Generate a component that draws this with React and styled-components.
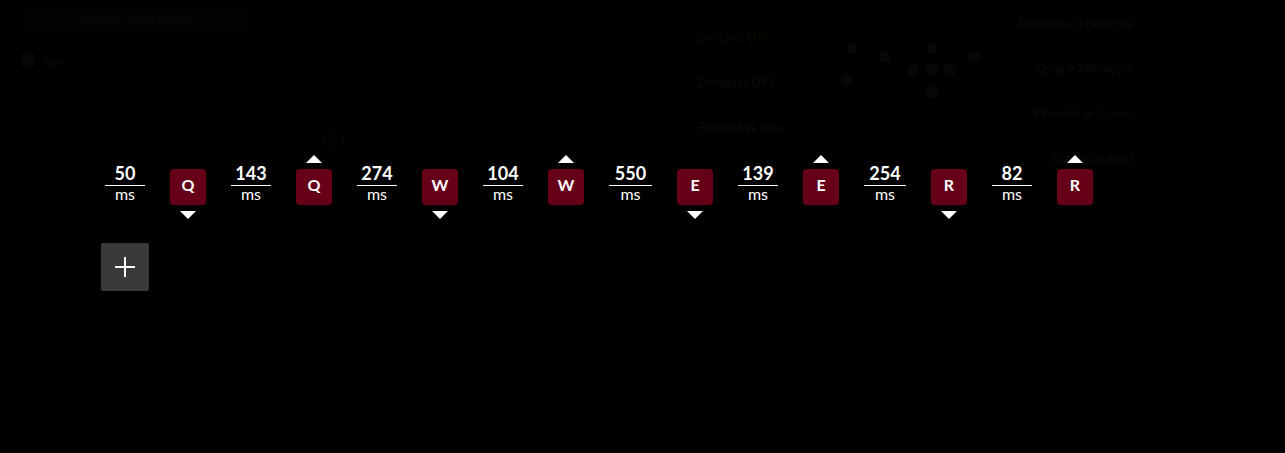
import React from "react";
import styled, { createGlobalStyle } from "styled-components";

const GlobalStyle = createGlobalStyle`
  * { box-sizing: border-box; }
  body {
    margin: 0;
    background: #000;
    color: #fff;
    font-family: Lato, "Open Sans", sans-serif;
  }
  button { font: inherit; color: inherit; border: 0; padding: 0; }
`;

const Screen = styled.div`
  position: relative;
  min-height: 100vh;
`;

const Underlay = styled.div`
  display: flex;
  justify-content: space-between;
  padding: 7px 152px 0 21px;
  color: #090909;
  font-size: 13px;
  line-height: 16px;
  font-weight: 700;
`;

const Sidebar = styled.div`
  display: flex;
  flex-direction: column;
  gap: 20px;
  width: 313px;
`;

const CreateButton = styled.button`
  width: 230px;
  height: 25px;
  background: #020202;
  font-size: 10px;
  text-align: center;
`;

const MacroRow = styled.div`
  display: flex;
  align-items: center;
  gap: 10px;
  height: 16px;
`;

const MacroIcon = styled.span`
  width: 14px;
  height: 14px;
  border-radius: 2px;
  background: #060606;
`;

const CollapseButton = styled.button`
  align-self: flex-end;
  width: 20px;
  height: 20px;
  margin: 42px -10px 0 0;
  border: 1px solid #090909;
  border-radius: 50%;
  background: none;
  line-height: 16px;
`;

const Assignments = styled.div`
  display: flex;
  gap: 24px;
`;

const Labels = styled.ul`
  display: flex;
  flex-direction: column;
  gap: 29px;
  width: 120px;
  margin: 0;
  padding: ${(p) => (p.$end ? "8px" : "22px")} 0 0;
  list-style: none;
  text-align: ${(p) => (p.$end ? "right" : "left")};
  white-space: nowrap;
`;

const Label = styled.li`
  color: ${(p) => (p.$accent ? "#090700" : "#090909")};
`;

const Mouse = styled.svg`
  width: 148px;
  height: 100px;
  fill: #070707;
`;

const Editor = styled.main`
  position: absolute;
  inset: 0;
  padding: 155px 101px 0;
`;

const Timeline = styled.ol`
  display: flex;
  flex-wrap: wrap;
  align-items: center;
  gap: 25px;
  margin: 0;
  padding: 0 4px;
  list-style: none;
`;

const Step = styled.li`
  display: flex;
  align-items: center;
  gap: 25px;
`;

const Delay = styled.div`
  width: ${(p) => p.$width}px;
  padding-bottom: 8px;
  text-align: center;
`;

const Amount = styled.div`
  height: 22px;
  border-bottom: 1px solid #fff;
  font-size: 18px;
  line-height: 18px;
  font-weight: 700;
`;

const Unit = styled.div`
  font-size: 16px;
  line-height: 16px;
`;

const KeyEvent = styled.div`
  display: flex;
  flex-direction: column;
  align-items: center;
  gap: 6px;
`;

const Arrow = styled.span`
  width: 16px;
  height: 8px;
  background: ${(p) => (p.$shown ? "#fff" : "none")};
  clip-path: ${(p) =>
    p.$up ? "polygon(50% 0, 100% 100%, 0 100%)" : "polygon(0 0, 100% 0, 50% 100%)"};
`;

const Key = styled.button`
  width: 36px;
  height: 36px;
  padding-bottom: 4px;
  border-radius: 4px;
  background: #660019;
  font-size: 16px;
  line-height: 32px;
  font-weight: 700;
  text-align: center;
`;

const AddButton = styled.button`
  display: grid;
  place-items: center;
  width: 48px;
  height: 48px;
  margin-top: 24px;
  border-radius: 2px;
  background: #3a3a3a;
`;

const steps = [
  { ms: 50, key: "Q", up: false },
  { ms: 143, key: "Q", up: true },
  { ms: 274, key: "W", up: false },
  { ms: 104, key: "W", up: true },
  { ms: 550, key: "E", up: false, width: 43 },
  { ms: 139, key: "E", up: true },
  { ms: 254, key: "R", up: false, width: 42 },
  { ms: 82, key: "R", up: true },
];

const dots = [
  [11, 41], [44, 50], [6, 73], [72, 63], [91, 41], [91, 63], [109, 63], [91, 85], [133, 50],
];

export default function App() {
  return (
    <Screen>
      <GlobalStyle />
      <Underlay>
        <Sidebar>
          <CreateButton>UTWÓRZ NOWE MAKRO</CreateButton>
          <MacroRow>
            <MacroIcon />
            qw
          </MacroRow>
          <CollapseButton aria-label="Zwiń">‹</CollapseButton>
        </Sidebar>
        <Assignments>
          <Labels>
            <Label $accent>Zwiększ DPI</Label>
            <Label>Zmniejsz DPI</Label>
            <Label>Przewiń w lewo</Label>
          </Labels>
          <Mouse viewBox="0 0 148 100" aria-hidden="true">
            {dots.map(([x, y]) => (
              <circle key={`${x}-${y}`} cx={x} cy={y} r="6" />
            ))}
          </Mouse>
          <Labels $end>
            <Label>Środkowe kliknięcie</Label>
            <Label>Drugie kliknięcie</Label>
            <Label>Przewiń w prawo</Label>
            <Label>Przejście dalej</Label>
          </Labels>
        </Assignments>
      </Underlay>
      <Editor>
        <Timeline>
          {steps.map((s, i) => (
            <Step key={i}>
              <Delay $width={s.width || 40}>
                <Amount>{s.ms}</Amount>
                <Unit>ms</Unit>
              </Delay>
              <KeyEvent>
                <Arrow $up $shown={s.up} />
                <Key>{s.key}</Key>
                <Arrow $shown={!s.up} />
              </KeyEvent>
            </Step>
          ))}
        </Timeline>
        <AddButton aria-label="Dodaj">
          <svg width="20" height="20" viewBox="0 0 20 20" aria-hidden="true">
            <path d="M10 0v20M0 10h20" stroke="#fff" strokeWidth="2" />
          </svg>
        </AddButton>
      </Editor>
    </Screen>
  );
}
